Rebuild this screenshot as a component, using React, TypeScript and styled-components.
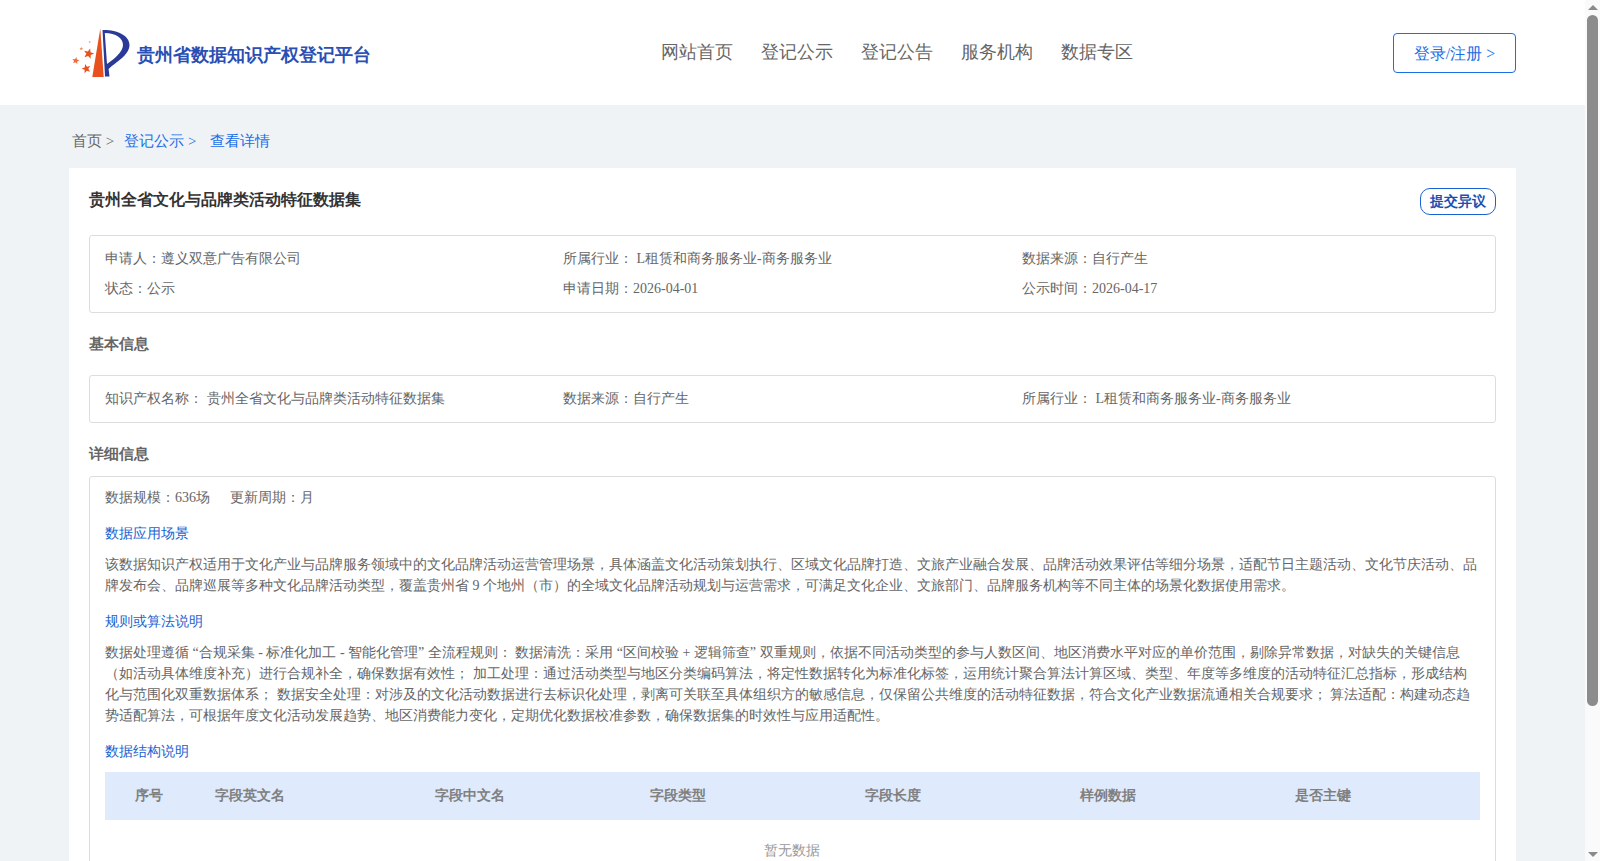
import React from "react";
import styled, { createGlobalStyle } from "styled-components";

const Global = createGlobalStyle`
  html, body { margin: 0; padding: 0; height: 100%; overflow: hidden; }
  body { font-family: serif; background: #eff3f6; }
  * { box-sizing: border-box; }
`;

const Frame = styled.div`
  display: flex;
  width: 1600px;
  height: 861px;
  overflow: hidden;
`;
const Page = styled.div`
  width: 1585px;
  height: 861px;
  overflow: hidden;
  background: #eff3f6;
`;
const Scrollbar = styled.div`
  width: 15px;
  height: 861px;
  background: #fafafa;
  display: flex;
  flex-direction: column;
  align-items: center;
  justify-content: space-between;
  padding: 5px 0 4px;
`;
const Thumb = styled.div`
  width: 11px;
  height: 691px;
  margin-top: 5px;
  background: #8c8c8c;
  border-radius: 6px;
`;
const ArrowUp = styled.div`
  width: 0;
  height: 0;
  border-left: 5px solid transparent;
  border-right: 5px solid transparent;
  border-bottom: 5px solid #8a8a8a;
`;
const ArrowDown = styled.div`
  width: 0;
  height: 0;
  border-left: 5px solid transparent;
  border-right: 5px solid transparent;
  border-top: 5px solid #8a8a8a;
  margin-top: auto;
`;
const Header = styled.header`
  height: 105px;
  background: #fff;
  padding: 0 69px 0 72px;
  display: flex;
  align-items: center;
  justify-content: space-between;
`;
const Brand = styled.div`
  display: flex;
  align-items: center;
  width: 589px;
  gap: 7px;
`;
const BrandName = styled.span`
  font-size: 18px;
  font-weight: 700;
  color: #2a4fb4;
  margin-top: 4px;
`;
const Nav = styled.nav`
  display: flex;
  gap: 28px;
  flex: 1;
  margin-bottom: 2px;
`;
const NavItem = styled.a`
  font-size: 18px;
  color: #666;
`;
const LoginButton = styled.button`
  width: 123px;
  height: 40px;
  background: #fff;
  border: 1px solid #1a6ee6;
  border-radius: 4px;
  color: #1a6ee6;
  font: inherit;
  font-size: 16px;
  padding: 3px 0 0;
`;
const Container = styled.main`
  margin: 0 69px;
`;
const Crumbs = styled.div`
  height: 63px;
  padding: 26px 0 0 3px;
  font-size: 15px;
  line-height: 20px;
  color: #666;
  display: flex;
`;
const Crumb = styled.span<{ $blue?: boolean; $gap: number }>`
  color: ${(p) => (p.$blue ? "#1a6ee6" : "#666")};
  margin-right: ${(p) => p.$gap}px;
`;
const Card = styled.section`
  background: #fff;
  padding: 20px 20px 0;
  height: 700px;
`;
const TitleRow = styled.div`
  display: flex;
  align-items: flex-start;
  justify-content: space-between;
  height: 47px;
`;
const Title = styled.h1`
  margin: 0;
  font-size: 16px;
  line-height: 24px;
  font-weight: 700;
  color: #333;
`;
const ObjectionButton = styled.button`
  width: 76px;
  height: 27px;
  padding: 0;
  background: #fff;
  border: 1px solid #1a62d0;
  border-radius: 10px;
  color: #1d4fb0;
  font: inherit;
  font-size: 14px;
  font-weight: 700;
`;
const Box = styled.div`
  border: 1px solid #ddd;
  border-radius: 3px;
  padding: 0 15px;
  font-size: 14px;
  color: #666;
`;
const InfoGrid = styled(Box)`
  display: grid;
  grid-template-columns: 458px 459px 1fr;
  row-gap: 9px;
  line-height: 21px;
  padding-top: 12px;
  padding-bottom: 13px;
`;
const SectionTitle = styled.h2<{ $top: number; $bottom: number }>`
  margin: ${(p) => p.$top}px 0 ${(p) => p.$bottom}px;
  font-size: 15px;
  line-height: 24px;
  font-weight: 700;
  color: #666;
`;
const DetailBox = styled(Box)`
  padding-top: 10px;
  height: 500px;
`;
const Meta = styled.div`
  line-height: 21px;
  display: flex;
  gap: 20px;
`;
const BlueHead = styled.div<{ $top: number }>`
  color: #1a62d0;
  line-height: 21px;
  margin-top: ${(p) => p.$top}px;
`;
const Paragraph = styled.p`
  margin: 10px 0 0;
  line-height: 21px;
`;
const TableHead = styled.div`
  display: grid;
  grid-template-columns: 87px 220px 215px 215px 215px 215px 1fr;
  height: 48px;
  margin-top: 10px;
  padding-bottom: 1px;
  background: #dfebfc;
  align-items: center;
  font-weight: 700;
  color: #808080;
`;
const Th = styled.div<{ $pad: number }>`
  padding-left: ${(p) => p.$pad}px;
`;
const Empty = styled.div`
  text-align: center;
  color: #999;
  margin-top: 20px;
  padding-right: 1px;
  line-height: 21px;
`;

const star = (cx: number, cy: number, r: number, rot = 0) => {
  const pts: string[] = [];
  for (let i = 0; i < 10; i++) {
    const rad = i % 2 ? r * 0.42 : r;
    const a = (-90 + rot + i * 36) * (Math.PI / 180);
    pts.push(`${(cx + rad * Math.cos(a)).toFixed(2)},${(cy + rad * Math.sin(a)).toFixed(2)}`);
  }
  return pts.join(" ");
};

function Logo() {
  return (
    <svg width="58" height="50" viewBox="0 0 58 50" aria-hidden="true">
      <path d="M28.3 0.5 L20.3 49 L31.7 49 Z" fill="#e8501e" />
      <path
        d="M30.5 2 C44 1.5 57.5 7 57.5 17 C57.5 27 44 34 36.6 41 L37.5 48.5 L33 48.5 Z M32.8 5 L35 36 C42 31 51 24 51 17 C51 10 44 5 32.8 5 Z"
        fillRule="evenodd"
        fill="#2b3a96"
      />
      <polygon points={star(16.7, 25.7, 5.5, 15)} fill="#e8501e" />
      <polygon points={star(14.3, 40.7, 4.8, -15)} fill="#e8501e" />
      <polygon points={star(3.7, 32.7, 3.8, 10)} fill="#ec6a3c" />
      <polygon points={star(9.3, 20.7, 2, 0)} fill="#f0906a" />
      <polygon points={star(17.7, 14, 1.5, 0)} fill="#f4ad92" />
    </svg>
  );
}

export default function App() {
  return (
    <Frame>
      <Global />
      <Page>
        <Header>
          <Brand>
            <Logo />
            <BrandName>贵州省数据知识产权登记平台</BrandName>
          </Brand>
          <Nav>
            {["网站首页", "登记公示", "登记公告", "服务机构", "数据专区"].map((n) => (
              <NavItem key={n}>{n}</NavItem>
            ))}
          </Nav>
          <LoginButton>登录/注册 &gt;</LoginButton>
        </Header>
        <Container>
          <Crumbs>
            <Crumb $gap={10}>首页 &gt;</Crumb>
            <Crumb $blue $gap={14}>登记公示 &gt;</Crumb>
            <Crumb $blue $gap={0}>查看详情</Crumb>
          </Crumbs>
          <Card>
            <TitleRow>
              <Title>贵州全省文化与品牌类活动特征数据集</Title>
              <ObjectionButton>提交异议</ObjectionButton>
            </TitleRow>
            <InfoGrid>
              <div>申请人：遵义双意广告有限公司</div>
              <div>所属行业： L租赁和商务服务业-商务服务业</div>
              <div>数据来源：自行产生</div>
              <div>状态：公示</div>
              <div>申请日期：2026-04-01</div>
              <div>公示时间：2026-04-17</div>
            </InfoGrid>
            <SectionTitle $top={19} $bottom={19}>基本信息</SectionTitle>
            <InfoGrid>
              <div>知识产权名称： 贵州全省文化与品牌类活动特征数据集</div>
              <div>数据来源：自行产生</div>
              <div>所属行业： L租赁和商务服务业-商务服务业</div>
            </InfoGrid>
            <SectionTitle $top={19} $bottom={10}>详细信息</SectionTitle>
            <DetailBox>
              <Meta>
                <span>数据规模：636场</span>
                <span>更新周期：月</span>
              </Meta>
              <BlueHead $top={15}>数据应用场景</BlueHead>
              <Paragraph>
                该数据知识产权适用于文化产业与品牌服务领域中的文化品牌活动运营管理场景，具体涵盖文化活动策划执行、区域文化品牌打造、文旅产业融合发展、品牌活动效果评估等细分场景，适配节日主题活动、文化节庆活动、品牌发布会、品牌巡展等多种文化品牌活动类型，覆盖贵州省 9 个地州（市）的全域文化品牌活动规划与运营需求，可满足文化企业、文旅部门、品牌服务机构等不同主体的场景化数据使用需求。
              </Paragraph>
              <BlueHead $top={15}>规则或算法说明</BlueHead>
              <Paragraph>
                数据处理遵循 “合规采集 - 标准化加工 - 智能化管理” 全流程规则： 数据清洗：采用 “区间校验 + 逻辑筛查” 双重规则，依据不同活动类型的参与人数区间、地区消费水平对应的单价范围，剔除异常数据，对缺失的关键信息（如活动具体维度补充）进行合规补全，确保数据有效性； 加工处理：通过活动类型与地区分类编码算法，将定性数据转化为标准化标签，运用统计聚合算法计算区域、类型、年度等多维度的活动特征汇总指标，形成结构化与范围化双重数据体系； 数据安全处理：对涉及的文化活动数据进行去标识化处理，剥离可关联至具体组织方的敏感信息，仅保留公共维度的活动特征数据，符合文化产业数据流通相关合规要求； 算法适配：构建动态趋势适配算法，可根据年度文化活动发展趋势、地区消费能力变化，定期优化数据校准参数，确保数据集的时效性与应用适配性。
              </Paragraph>
              <BlueHead $top={15}>数据结构说明</BlueHead>
              <TableHead>
                <Th $pad={30}>序号</Th>
                <Th $pad={23}>字段英文名</Th>
                <Th $pad={23}>字段中文名</Th>
                <Th $pad={23}>字段类型</Th>
                <Th $pad={23}>字段长度</Th>
                <Th $pad={23}>样例数据</Th>
                <Th $pad={23}>是否主键</Th>
              </TableHead>
              <Empty>暂无数据</Empty>
            </DetailBox>
          </Card>
        </Container>
      </Page>
      <Scrollbar>
        <ArrowUp />
        <Thumb />
        <ArrowDown />
      </Scrollbar>
    </Frame>
  );
}
